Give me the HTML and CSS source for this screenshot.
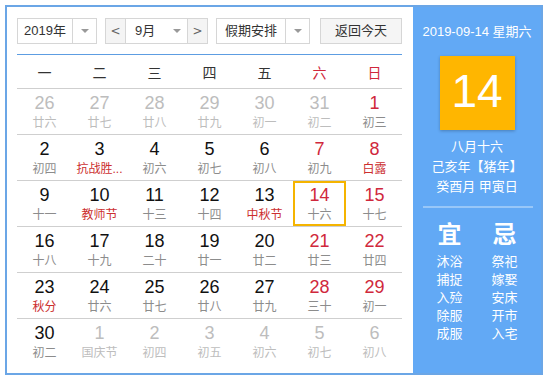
FILE: index.html
```html
<!DOCTYPE html>
<html lang="zh">
<head>
<meta charset="utf-8">
<link rel="stylesheet" href="styles.css">
</head>
<body>
<div class="cal">
  <div class="main">
    <div class="toolbar">
      <div class="select year"><span class="val">2019年</span><span class="arr"><i></i></span></div>
      <div class="select month"><span class="nav">&lt;</span><span class="val">9月</span><span class="arr"><i></i></span><span class="nav next">&gt;</span></div>
      <div class="select holiday"><span class="val">假期安排</span><span class="arr"><i></i></span></div>
      <div class="today">返回今天</div>
    </div>
    <div class="week">
      <span>一</span><span>二</span><span>三</span><span>四</span><span>五</span><span class="we">六</span><span class="we">日</span>
    </div>
    <div class="grid">
      <div class="row">
        <div class="cell other"><b>26</b><i>廿六</i></div>
        <div class="cell other"><b>27</b><i>廿七</i></div>
        <div class="cell other"><b>28</b><i>廿八</i></div>
        <div class="cell other"><b>29</b><i>廿九</i></div>
        <div class="cell other"><b>30</b><i>初一</i></div>
        <div class="cell other"><b>31</b><i>初二</i></div>
        <div class="cell we"><b>1</b><i>初三</i></div>
      </div>
      <div class="row">
        <div class="cell"><b>2</b><i>初四</i></div>
        <div class="cell"><b>3</b><i class="fest">抗战胜...</i></div>
        <div class="cell"><b>4</b><i>初六</i></div>
        <div class="cell"><b>5</b><i>初七</i></div>
        <div class="cell"><b>6</b><i>初八</i></div>
        <div class="cell we"><b>7</b><i>初九</i></div>
        <div class="cell we"><b>8</b><i class="fest">白露</i></div>
      </div>
      <div class="row">
        <div class="cell"><b>9</b><i>十一</i></div>
        <div class="cell"><b>10</b><i class="fest">教师节</i></div>
        <div class="cell"><b>11</b><i>十三</i></div>
        <div class="cell"><b>12</b><i>十四</i></div>
        <div class="cell"><b>13</b><i class="fest">中秋节</i></div>
        <div class="cell we sel"><b>14</b><i>十六</i></div>
        <div class="cell we"><b>15</b><i>十七</i></div>
      </div>
      <div class="row">
        <div class="cell"><b>16</b><i>十八</i></div>
        <div class="cell"><b>17</b><i>十九</i></div>
        <div class="cell"><b>18</b><i>二十</i></div>
        <div class="cell"><b>19</b><i>廿一</i></div>
        <div class="cell"><b>20</b><i>廿二</i></div>
        <div class="cell we"><b>21</b><i>廿三</i></div>
        <div class="cell we"><b>22</b><i>廿四</i></div>
      </div>
      <div class="row">
        <div class="cell"><b>23</b><i class="fest">秋分</i></div>
        <div class="cell"><b>24</b><i>廿六</i></div>
        <div class="cell"><b>25</b><i>廿七</i></div>
        <div class="cell"><b>26</b><i>廿八</i></div>
        <div class="cell"><b>27</b><i>廿九</i></div>
        <div class="cell we"><b>28</b><i>三十</i></div>
        <div class="cell we"><b>29</b><i>初一</i></div>
      </div>
      <div class="row last">
        <div class="cell"><b>30</b><i>初二</i></div>
        <div class="cell other"><b>1</b><i>国庆节</i></div>
        <div class="cell other"><b>2</b><i>初四</i></div>
        <div class="cell other"><b>3</b><i>初五</i></div>
        <div class="cell other"><b>4</b><i>初六</i></div>
        <div class="cell other"><b>5</b><i>初七</i></div>
        <div class="cell other"><b>6</b><i>初八</i></div>
      </div>
    </div>
  </div>
  <div class="side">
    <div class="date">2019-09-14 星期六</div>
    <div class="big">14</div>
    <div class="lunar">
      <div>八月十六</div>
      <div>己亥年【猪年】</div>
      <div>癸酉月 甲寅日</div>
    </div>
    <div class="sep"></div>
    <div class="yiji">
      <div class="col">
        <div class="hd">宜</div>
        <div>沐浴</div><div>捕捉</div><div>入殓</div><div>除服</div><div>成服</div>
      </div>
      <div class="col">
        <div class="hd">忌</div>
        <div>祭祀</div><div>嫁娶</div><div>安床</div><div>开市</div><div>入宅</div>
      </div>
    </div>
  </div>
</div>
</body>
</html>
```

FILE: styles.css
```css
* { box-sizing: border-box; }
body {
  margin: 0;
  background: #fff;
  font-family: "Liberation Sans", "Noto Sans CJK SC", sans-serif;
  color: #333;
}
.cal {
  margin: 5px;
  width: 538px;
  height: 370px;
  border: 2px solid #6ba6e6;
  display: flex;
}
.main {
  width: 406px;
  padding: 11px 11px 0 10px;
}
.toolbar {
  display: flex;
  height: 26px;
  font-size: 13px;
}
.select {
  display: flex;
  border: 1px solid #d6d6d6;
  background: #fff;
  height: 26px;
  line-height: 24px;
}
.select .val { flex: 1; text-align: center; }
.select .arr {
  width: 24px;
  border-left: 1px solid #d6d6d6;
  display: flex;
  align-items: center;
  justify-content: center;
}
.select .arr i {
  width: 0; height: 0;
  border-left: 4px solid transparent;
  border-right: 4px solid transparent;
  border-top: 4px solid #999;
}
.year { width: 80px; }
.month { width: 103px; margin-left: 8px; }
.month .arr { border-left: none; width: 20px; }
.month .val { text-align: left; padding-left: 9px; }
.month .nav {
  width: 20px;
  text-align: center;
  background: #f4f4f4;
  color: #666;
  border-right: 1px solid #d6d6d6;
  font-family: "DejaVu Sans", sans-serif;
  font-size: 12px;
}
.month .nav.next { border-right: none; border-left: 1px solid #d6d6d6; }
.holiday { width: 94px; margin-left: 8px; }
.today {
  margin-left: 10px;
  width: 82px;
  height: 26px;
  line-height: 24px;
  text-align: center;
  border: 1px solid #d6d6d6;
  background: #f5f5f5;
}
.week {
  margin-top: 10px;
  border-top: 1px solid #5d9de2;
  border-bottom: 1px solid #cfcfcf;
  height: 35px;
  display: grid;
  grid-template-columns: repeat(7, 55px);
  align-items: center;
  text-align: center;
  font-size: 14px;
  color: #333;
}
.week .we { color: #d0283c; }
.row {
  display: grid;
  grid-template-columns: repeat(7, 55px);
  border-bottom: 1px solid #cfcfcf;
  height: 46px;
}
.row.last { border-bottom: none; }
.cell {
  position: relative;
  text-align: center;
  padding-top: 4px;
}
.cell b {
  display: block;
  font-weight: normal;
  font-size: 18px;
  line-height: 20px;
  color: #111;
}
.cell i {
  display: block;
  font-style: normal;
  font-size: 12px;
  line-height: 16px;
  margin-top: 2px;
  color: #8c8c8c;
}
.cell.we b { color: #d0283c; }
.cell i.fest { color: #cc2f2f; }
.cell.other b, .cell.other i { color: #bdbdbd; }
.cell.sel::after {
  content: "";
  position: absolute;
  left: 1px; right: 1px; top: 0; bottom: 0;
  border: 2px solid #f5b400;
}
.side {
  flex: 1;
  background: #62a9f5;
  color: #fff;
  text-align: center;
  padding-top: 17px;
  font-family: "Liberation Sans", "Noto Sans CJK SC", sans-serif;
}
.date { font-size: 13px; line-height: 16px; }
.big {
  width: 75px;
  height: 74px;
  margin: 16px auto 0;
  background: #ffb600;
  font-size: 46px;
  line-height: 70px;
  box-shadow: 0 1px 3px rgba(0,0,0,0.25);
}
.lunar {
  margin-top: 7px;
  font-size: 13px;
  line-height: 20px;
}
.sep {
  height: 2px;
  margin: 9px 8px 0 10px;
  background: rgba(255,255,255,0.35);
}
.yiji {
  display: grid;
  grid-template-columns: 55px 55px;
  justify-content: center;
  margin-top: 13px;
  font-size: 13px;
  line-height: 18px;
}
.yiji .hd {
  font-size: 24px;
  line-height: 28px;
  font-weight: bold;
  margin-bottom: 4px;
}
```
